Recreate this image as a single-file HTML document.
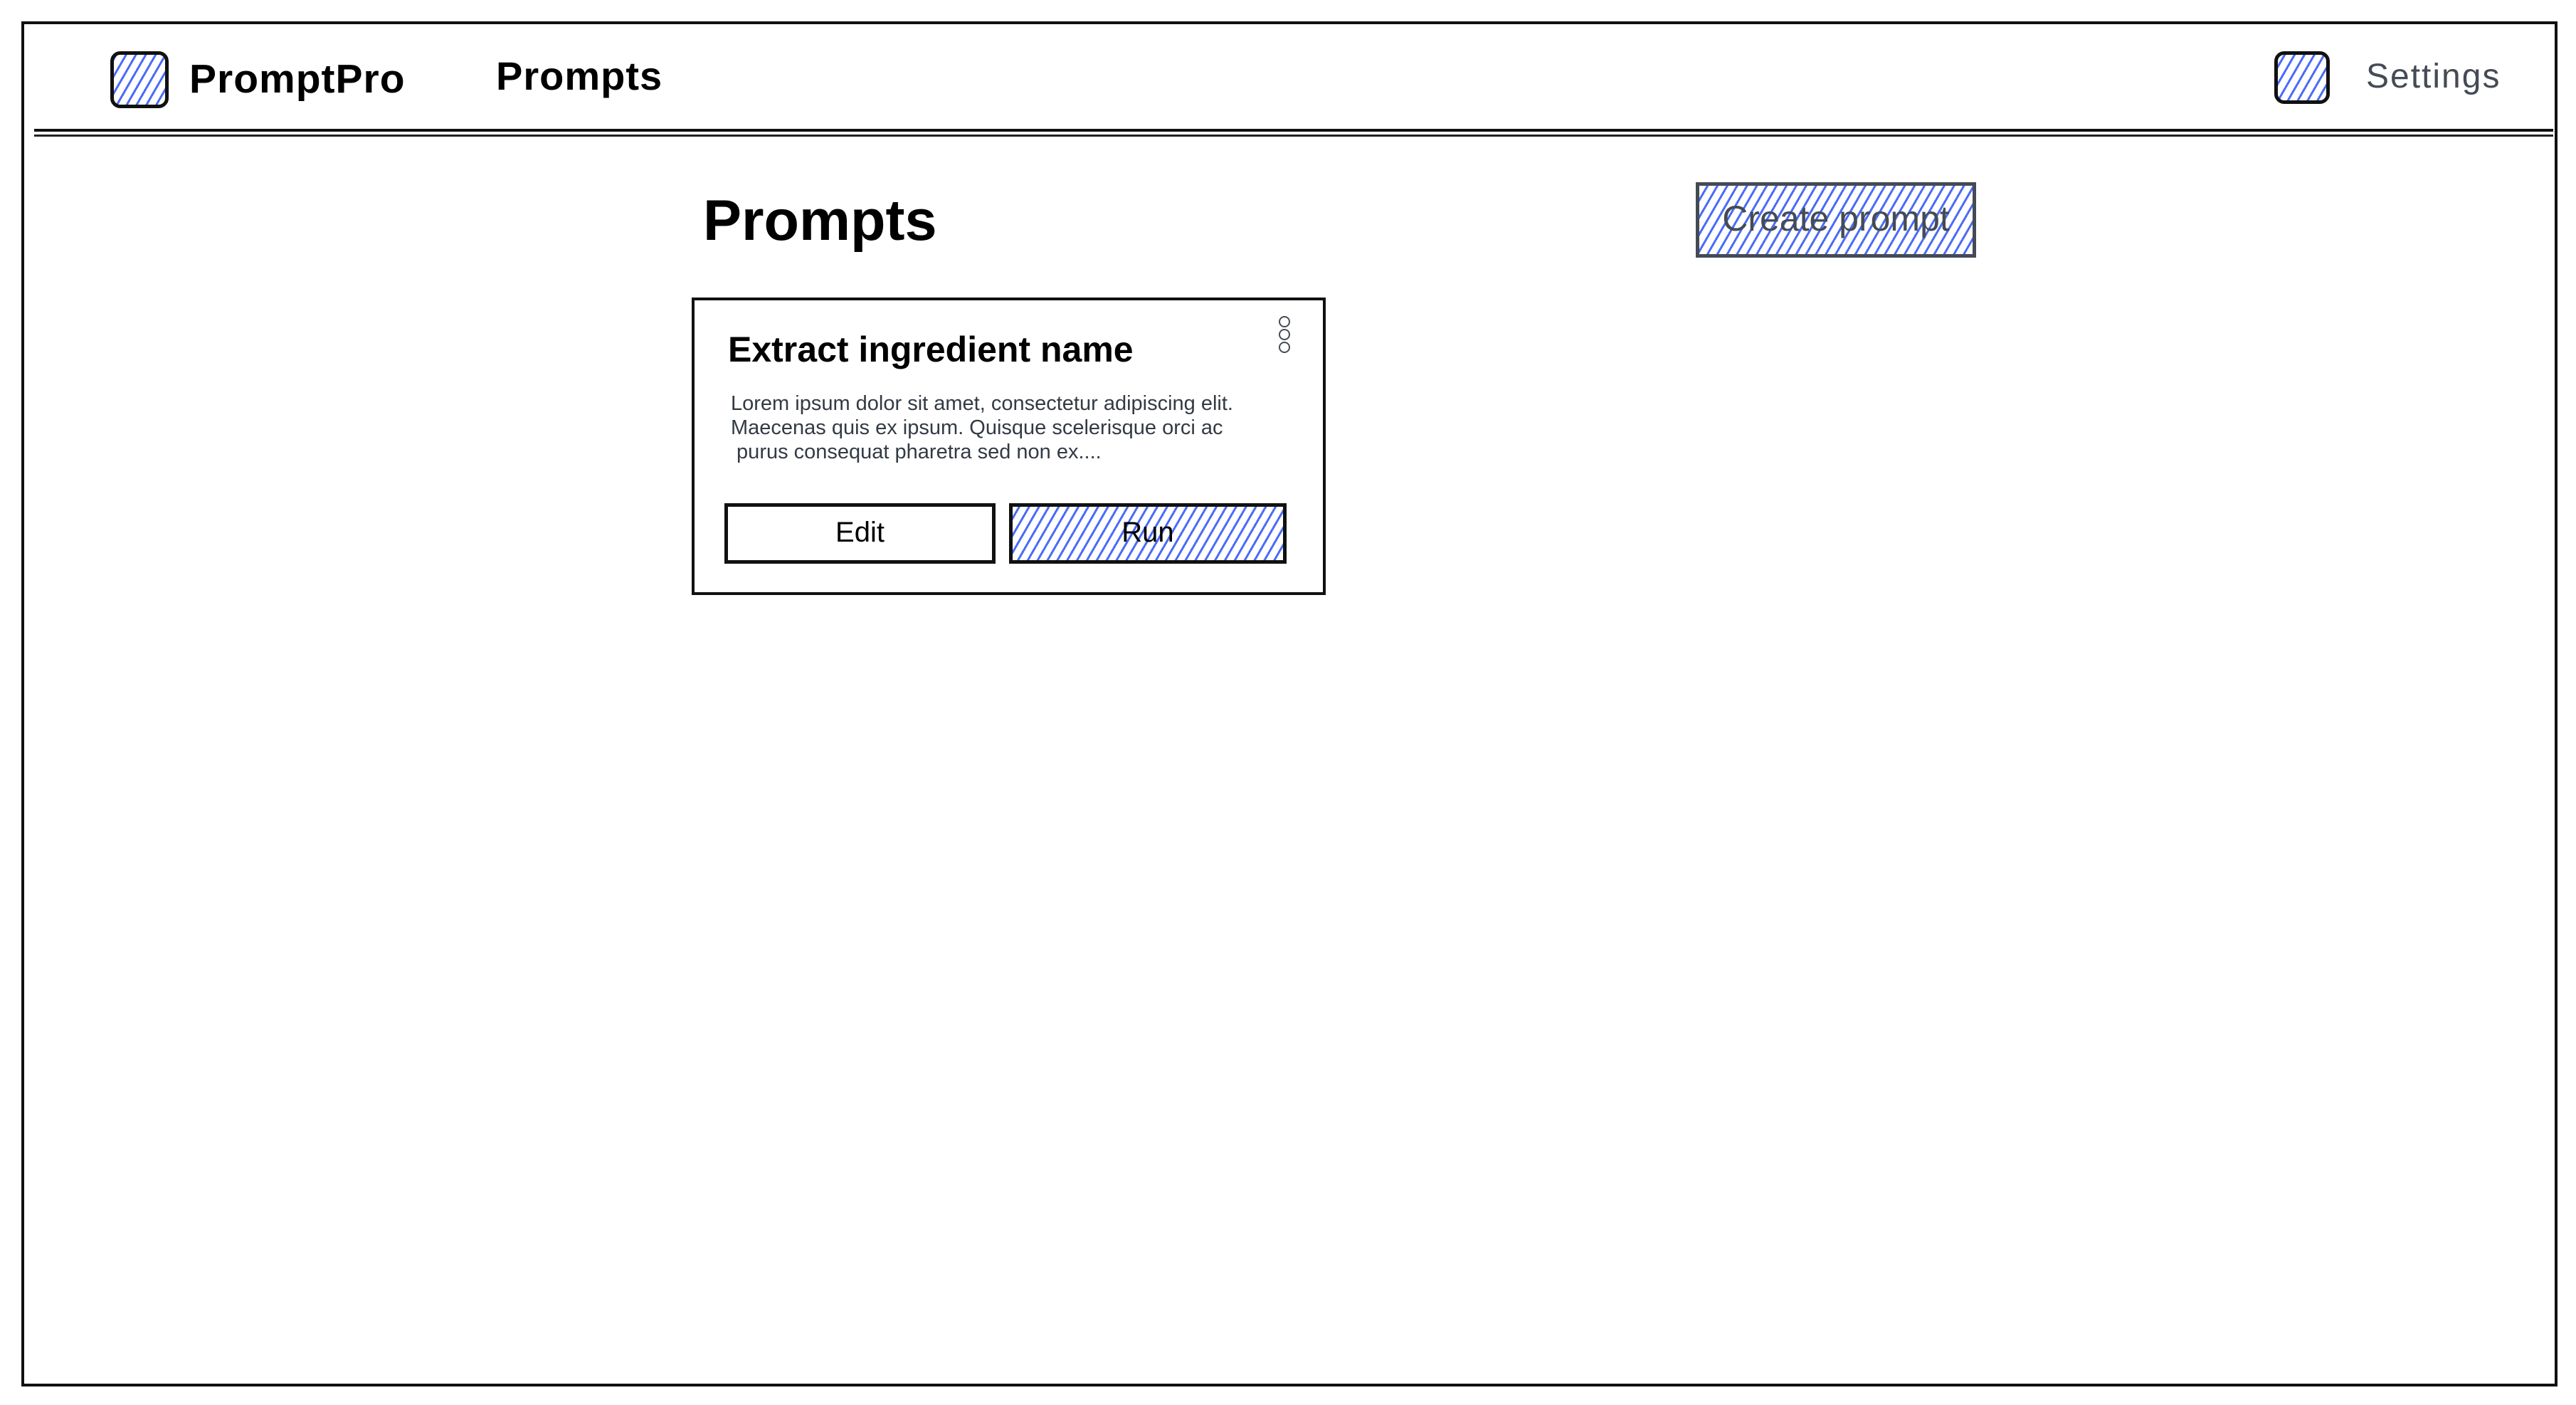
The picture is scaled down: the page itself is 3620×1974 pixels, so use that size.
<!DOCTYPE html>
<html><head><meta charset="utf-8"><style>
html,body{margin:0;padding:0;background:#fff;}
body{width:3620px;height:1974px;position:relative;overflow:hidden;font-family:"Liberation Sans",sans-serif;color:#000;}
.a{position:absolute;}
.hatch{background:repeating-linear-gradient(-60deg,#fff 0 9px,#4a6cf7 9px 12px);}
</style></head><body>
<div class="a" style="left:30px;top:30px;width:3556px;height:1910px;border:4px solid #111;"></div>
<div class="a" style="left:48px;top:181px;width:3540px;height:0;border-top:4px solid #111;"></div>
<div class="a" style="left:48px;top:189px;width:3540px;height:0;border-top:3px solid #222;"></div>

<div class="a hatch" style="left:155px;top:72px;width:72px;height:70px;border:5px solid #111;border-radius:14px;"></div>
<div class="a" style="left:266px;top:78px;font-size:57px;font-weight:bold;letter-spacing:1px;">PromptPro</div>
<div class="a" style="left:697px;top:74px;font-size:56px;font-weight:bold;letter-spacing:1px;">Prompts</div>

<div class="a hatch" style="left:3196px;top:72px;width:68px;height:64px;border:5px solid #111;border-radius:14px;"></div>
<div class="a" style="left:3325px;top:80px;font-size:48px;color:#454b55;letter-spacing:2px;">Settings</div>

<div class="a" style="left:988px;top:264px;font-size:81px;font-weight:bold;">Prompts</div>

<div class="a hatch" style="left:2383px;top:256px;width:384px;height:96px;border:5px solid #454b55;"></div>
<div class="a" style="left:2383px;top:278px;width:394px;text-align:center;font-size:50px;color:#454b55;">Create prompt</div>

<div class="a" style="left:972px;top:418px;width:883px;height:410px;border:4px solid #111;"></div>
<div class="a" style="left:1023px;top:462px;font-size:50px;font-weight:bold;">Extract ingredient name</div>
<div class="a" style="left:1797px;top:444px;width:14px;">
<div style="width:12px;height:12px;border:2px solid #454b55;border-radius:50%;margin-bottom:2px;"></div>
<div style="width:12px;height:12px;border:2px solid #454b55;border-radius:50%;margin-bottom:2px;"></div>
<div style="width:12px;height:12px;border:2px solid #454b55;border-radius:50%;"></div>
</div>
<div class="a" style="left:1027px;top:550px;font-size:29px;line-height:34px;color:#333a44;">Lorem ipsum dolor sit amet, consectetur adipiscing elit.<br>Maecenas quis ex ipsum. Quisque scelerisque orci ac<br>&nbsp;purus consequat pharetra sed non ex....</div>

<div class="a" style="left:1018px;top:707px;width:371px;height:75px;border:5px solid #111;"></div>
<div class="a" style="left:1018px;top:726px;width:381px;text-align:center;font-size:40px;">Edit</div>
<div class="a hatch" style="left:1418px;top:707px;width:380px;height:75px;border:5px solid #111;"></div>
<div class="a" style="left:1418px;top:726px;width:390px;text-align:center;font-size:40px;">Run</div>
</body></html>
